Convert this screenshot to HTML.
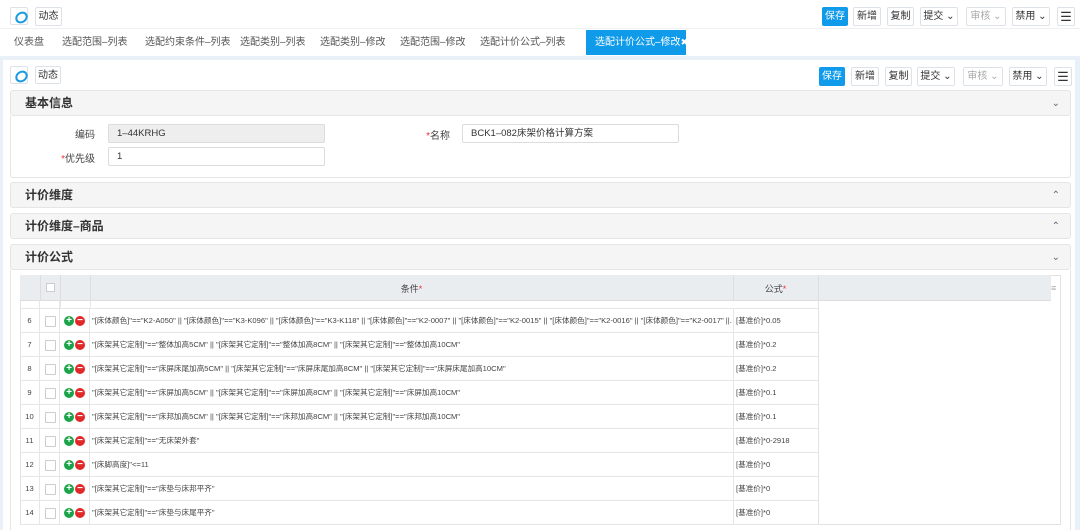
<!DOCTYPE html>
<html><head><meta charset="utf-8"><style>
*{box-sizing:border-box;margin:0;padding:0}
body{width:1080px;height:524px;overflow:hidden;background:#eaf0f7;font-family:"Liberation Sans","Noto Sans CJK SC",sans-serif;color:#333;position:relative;font-size:12px}
.a{position:absolute}
.btn{position:absolute;height:19px;border:1px solid #dde2e8;border-radius:2px;background:#fff;font-size:10px;line-height:17px;text-align:center;color:#333;white-space:nowrap}
.blue{background:#0f9aea;color:#fff;border-color:#0f9aea}
.gray{color:#aaa}
.logo{position:absolute;width:18px;height:18px;border:1px solid #dde2e8;border-radius:2px;background:#fff}
.logo:after{content:"";position:absolute;left:4px;top:4px;width:9px;height:7px;border:2px solid #1a9ae0;border-radius:50%;transform:rotate(-35deg)}
.sec{position:absolute;left:10px;width:1061px;background:#f5f5f5;border:1px solid #e5e5e5;border-radius:3px;font-size:12px;font-weight:bold;color:#333;padding-left:14px}
.chev{position:absolute;right:10px;font-size:10px;color:#5a6d85;font-weight:normal}
.tab{position:absolute;top:30px;height:25px;line-height:25px;font-size:10px;color:#555;white-space:nowrap}
.lbl{position:absolute;font-size:10px;color:#444;text-align:right}
.inp{position:absolute;height:19px;border:1px solid #dcdcdc;border-radius:2px;background:#fff;font-size:9.5px;line-height:17px;padding-left:8px;color:#333}
.row{position:absolute;left:20px;width:798px;height:24px;border-bottom:1px solid #e6e6e6;font-size:7.6px;color:#444;line-height:24px}
.row div{position:absolute;top:0;height:24px}
.n{left:0;width:20px;text-align:center;border-right:1px solid #e6e6e6}
.cb{left:20px;width:20px;border-right:1px solid #e6e6e6}
.cb.k:after{content:"";position:absolute;left:5px;top:7px;width:9px;height:9px;border:1px solid #ccc;border-radius:1px;background:#fff}
.ic{left:40px;width:30px;border-right:1px solid #e6e6e6}
.ic:before,.ic:after{position:absolute;top:7px;width:10px;height:10px;border-radius:50%;color:#fff;font-size:10px;line-height:9px;text-align:center;font-weight:bold}
.ic:before{content:"+";left:4px;background:#1aa34a}
.ic:after{content:"−";left:15px;background:#e02a2a}
.c{left:72px;width:640px;white-space:nowrap;overflow:hidden}
.f{left:713px;width:85px;border-left:1px solid #e6e6e6;padding-left:2px}
</style></head><body>
<div class="a" style="left:0;top:0;width:1080px;height:56px;background:#fff"></div>
<div class="a" style="left:0;top:28px;width:1080px;height:1px;background:#f0f0f0"></div>
<div class="logo" style="left:10px;top:7px"></div>
<div class="btn" style="left:35px;top:7px;width:27px;height:19px">动态</div>
<div class="btn blue" style="left:822px;top:7px;width:26px">保存</div>
<div class="btn" style="left:853px;top:7px;width:28px">新增</div>
<div class="btn" style="left:887px;top:7px;width:27px">复制</div>
<div class="btn" style="left:920px;top:7px;width:38px">提交 ⌄</div>
<div class="btn gray" style="left:966px;top:7px;width:40px">审核 ⌄</div>
<div class="btn" style="left:1012px;top:7px;width:38px">禁用 ⌄</div>
<div class="btn" style="left:1057px;top:7px;width:18px;font-size:13px">☰</div>
<div class="tab" style="left:14px">仪表盘</div>
<div class="tab" style="left:62px">选配范围–列表</div>
<div class="tab" style="left:145px">选配约束条件–列表</div>
<div class="tab" style="left:240px">选配类别–列表</div>
<div class="tab" style="left:320px">选配类别–修改</div>
<div class="tab" style="left:400px">选配范围–修改</div>
<div class="tab" style="left:480px">选配计价公式–列表</div>
<div class="tab" style="left:586px;width:100px;background:#0f9aea;color:#fff;padding-left:9px;overflow:hidden">选配计价公式–修改<span style="font-size:9px">✖</span></div>

<div class="a" style="left:3px;top:60px;width:1072px;height:470px;background:#fff"></div>
<div class="logo" style="left:10px;top:66px"></div>
<div class="btn" style="left:35px;top:66px;width:26px;height:18px">动态</div>
<div class="btn blue" style="left:819px;top:67px;width:26px">保存</div>
<div class="btn" style="left:851px;top:67px;width:28px">新增</div>
<div class="btn" style="left:885px;top:67px;width:27px">复制</div>
<div class="btn" style="left:917px;top:67px;width:38px">提交 ⌄</div>
<div class="btn gray" style="left:963px;top:67px;width:40px">审核 ⌄</div>
<div class="btn" style="left:1009px;top:67px;width:38px">禁用 ⌄</div>
<div class="btn" style="left:1054px;top:67px;width:18px;font-size:13px">☰</div>

<div class="sec" style="top:90px;height:26px;line-height:25px">基本信息<span class="chev">⌄</span></div>
<div class="a" style="left:10px;top:116px;width:1061px;height:62px;border:1px solid #e5e5e5;border-top:none;border-radius:0 0 3px 3px"></div>
<div class="lbl" style="left:40px;top:126px;width:55px">编码</div>
<div class="inp" style="left:108px;top:124px;width:217px;background:#eee">1–44KRHG</div>
<div class="lbl" style="left:40px;top:150px;width:55px"><span style="color:#e33">*</span>优先级</div>
<div class="inp" style="left:108px;top:147px;width:217px">1</div>
<div class="lbl" style="left:400px;top:127px;width:50px"><span style="color:#e33">*</span>名称</div>
<div class="inp" style="left:462px;top:124px;width:217px">BCK1–082床架价格计算方案</div>

<div class="sec" style="top:182px;height:26px;line-height:25px">计价维度<span class="chev">⌃</span></div>
<div class="sec" style="top:213px;height:26px;line-height:25px">计价维度–商品<span class="chev">⌃</span></div>
<div class="sec" style="top:244px;height:26px;line-height:25px">计价公式<span class="chev">⌄</span></div>
<div class="a" style="left:10px;top:270px;width:1061px;height:260px;border-left:1px solid #e5e5e5;border-right:1px solid #e5e5e5"></div>

<div class="a" style="left:20px;top:275px;width:1041px;height:250px;border:1px solid #e2e2e2"></div>
<div class="a" style="left:20px;top:275px;width:1031px;height:26px;background:#e9edf0;border-bottom:1px solid #ddd"></div>
<div class="a" style="left:40px;top:275px;width:1px;height:26px;background:#ddd"></div>
<div class="a" style="left:46px;top:283px;width:9px;height:9px;border:1px solid #ccc;background:#fff"></div>
<div class="a" style="left:60px;top:275px;width:1px;height:26px;background:#ddd"></div>
<div class="a" style="left:90px;top:275px;width:1px;height:26px;background:#ddd"></div>
<div class="a" style="left:733px;top:275px;width:1px;height:26px;background:#ddd"></div>
<div class="a" style="left:818px;top:275px;width:1px;height:26px;background:#ddd"></div>
<div class="a" style="left:90px;top:282px;width:643px;text-align:center;font-size:9px;color:#444">条件<span style="color:#e33">*</span></div>
<div class="a" style="left:733px;top:282px;width:85px;text-align:center;font-size:9px;color:#444">公式<span style="color:#e33">*</span></div>
<div class="a" style="left:1051px;top:283px;font-size:9px;color:#aaa">≡</div>
<div class="a" style="left:818px;top:301px;width:1px;height:224px;background:#e2e2e2"></div>
<div class="row" style="top:301px;height:8px"><div class="n" style="height:8px"></div><div class="cb" style="height:8px"></div><div class="ic" style="height:8px;display:none"></div></div>
<div class="a" style="left:60px;top:301px;width:1px;height:8px;background:#e6e6e6"></div>
<div class="a" style="left:90px;top:301px;width:1px;height:8px;background:#e6e6e6"></div>

<div class="row" style="top:309px"><div class="n">6</div><div class="cb k"></div><div class="ic"></div><div class="c">"[床体颜色]"=="K2-A050" || "[床体颜色]"=="K3-K096" || "[床体颜色]"=="K3-K118" || "[床体颜色]"=="K2-0007" || "[床体颜色]"=="K2-0015" || "[床体颜色]"=="K2-0016" || "[床体颜色]"=="K2-0017" ||...</div><div class="f">[基准价]*0.05</div></div>
<div class="row" style="top:333px"><div class="n">7</div><div class="cb k"></div><div class="ic"></div><div class="c">"[床架其它定制]"=="整体加高5CM" || "[床架其它定制]"=="整体加高8CM" || "[床架其它定制]"=="整体加高10CM"</div><div class="f">[基准价]*0.2</div></div>
<div class="row" style="top:357px"><div class="n">8</div><div class="cb k"></div><div class="ic"></div><div class="c">"[床架其它定制]"=="床屏床尾加高5CM" || "[床架其它定制]"=="床屏床尾加高8CM" || "[床架其它定制]"=="床屏床尾加高10CM"</div><div class="f">[基准价]*0.2</div></div>
<div class="row" style="top:381px"><div class="n">9</div><div class="cb k"></div><div class="ic"></div><div class="c">"[床架其它定制]"=="床屏加高5CM" || "[床架其它定制]"=="床屏加高8CM" || "[床架其它定制]"=="床屏加高10CM"</div><div class="f">[基准价]*0.1</div></div>
<div class="row" style="top:405px"><div class="n">10</div><div class="cb k"></div><div class="ic"></div><div class="c">"[床架其它定制]"=="床邦加高5CM" || "[床架其它定制]"=="床邦加高8CM" || "[床架其它定制]"=="床邦加高10CM"</div><div class="f">[基准价]*0.1</div></div>
<div class="row" style="top:429px"><div class="n">11</div><div class="cb k"></div><div class="ic"></div><div class="c">"[床架其它定制]"=="无床架外套"</div><div class="f">[基准价]*0-2918</div></div>
<div class="row" style="top:453px"><div class="n">12</div><div class="cb k"></div><div class="ic"></div><div class="c">"[床脚高度]"&lt;=11</div><div class="f">[基准价]*0</div></div>
<div class="row" style="top:477px"><div class="n">13</div><div class="cb k"></div><div class="ic"></div><div class="c">"[床架其它定制]"=="床垫与床邦平齐"</div><div class="f">[基准价]*0</div></div>
<div class="row" style="top:501px"><div class="n">14</div><div class="cb k"></div><div class="ic"></div><div class="c">"[床架其它定制]"=="床垫与床尾平齐"</div><div class="f">[基准价]*0</div></div>
</body></html>
